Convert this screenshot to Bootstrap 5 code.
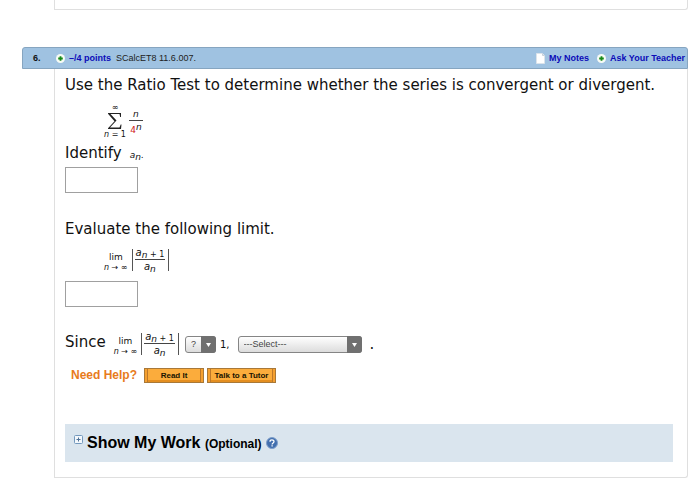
<!DOCTYPE html>
<html lang="en">
<head>
<meta charset="utf-8">
<meta name="viewport" content="width=device-width, initial-scale=1">
<title>SCalcET8 11.6.007</title>
<link href="https://cdn.jsdelivr.net/npm/bootstrap@5.3.0/dist/css/bootstrap.min.css" rel="stylesheet">
<style>
body{font-family:"DejaVu Sans",Verdana,sans-serif;color:#111;background:#fff;font-size:15px;line-height:20px}
.arial{font-family:"Liberation Sans",Arial,sans-serif}
.page{padding:0 12px 0 22px}
.panel{margin-left:32px;border:1px solid #dfdfdf}
.panel-prev{height:10px;border-top:0;border-radius:0 0 3px 0;margin-bottom:37px}
.panel-main{border-top:0;border-radius:0 0 3px 0;padding:6px 14px 15px 10px}
.q-head{height:22px;background:#9fc2e1;border:1px solid #86a5c0;border-radius:3px 3px 0 0;padding:0 2px 0 10px;font-size:9px;line-height:20px}
.q-num{width:23px}
.q-head a{color:#0b0bb8;font-weight:bold;text-decoration:none}
.q-src{color:#222;margin-left:5px}
.math{font-size:9px;line-height:11px}
.indent{margin-left:39px}
.tiny{font-size:8px;line-height:9px}
.fraction{margin:6px 0 0 3px}
.fraction .over{width:14px;text-align:center}
.fraction .under{padding-top:4px}
.var{font-size:10px}
.sub{font-size:9px;position:relative;top:2px}
.plus{font-size:8px;position:relative;top:1px}
.sup{font-size:9px;position:relative;top:-3px}
.over{border-bottom:1px solid #444}
.bars{border-left:1px solid #555;border-right:1px solid #555;padding:0 3px 0 2px;height:22px}
.bars .over{height:11px;line-height:8px;padding:0 1px}
.bars .under{height:11px;line-height:14px}
.red{color:#d02020}
.answer{width:73px;height:26px;border:1px solid #a0a0a0;border-radius:0;padding:2px 4px;font-size:14px;display:block}
.row-identify{margin:4px 0}
.gap-part{margin-top:26px}
.limit{margin-top:9px;margin-bottom:9px}
.gap-since{margin-top:25px}
.pick{position:relative;height:17px}
.pick select{appearance:none;height:17px;border:1px solid #858585;border-radius:3px;background:linear-gradient(#fff,#dcdcdc);font-size:9px;line-height:15px;padding:0 16px 0 5px;color:#444}
.pick svg{position:absolute;right:0;top:0;pointer-events:none}
.pick-op{width:31px;margin-left:6px}
.pick-word{width:124px}
.help-row{margin:12px 0 41px 6px}
.help{color:#e87b1c;font-size:12px;font-weight:bold;line-height:15px;margin-right:7px}
.gold{height:15px;border:1px solid #a87838;background:#fbac3c;box-shadow:inset 2px 0 0 #f5a030,inset 3px 0 0 #bd782a,inset -2px 0 0 #f5a030,inset -3px 0 0 #bd782a,inset 0 -2px 0 #e48e20;border-radius:0;padding:0;font-size:8px;line-height:13px;font-weight:bold;color:#201400}
.gold-read{width:60px;margin-right:3px}
.gold-tutor{width:69px}
.work{background:#dae5ee;height:38px;padding:0 9px;font-weight:bold}
.toggle{border:0;background:none;padding:0;line-height:0}
.work-title{font-size:16px;line-height:20px;color:#000}
.work-opt{font-size:12px}
</style>
<script src="https://cdn.jsdelivr.net/npm/bootstrap@5.3.0/dist/js/bootstrap.bundle.min.js"></script>
</head>
<body>
<main class="page">
  <div class="panel panel-prev"></div>
  <header class="q-head arial d-flex align-items-center">
    <b class="q-num">6.</b>
    <svg width="9" height="9" viewBox="0 0 9 9"><circle cx="4.500" cy="4.500" r="4.500" fill="#f7fbf5"/><path d="M4.500 2.200v4.600M2.200 4.500h4.600" stroke="#178a17" stroke-width="1.800"/></svg>
    <a class="ms-1" href="#">–/4 points</a>
    <span class="q-src">SCalcET8 11.6.007.</span>
    <svg class="ms-auto" width="9" height="11" viewBox="0 0 9 11"><path d="M.5.500h6l2 2v8h-8z" fill="#fff" stroke="#dbe3ea"/><path d="M6.500.500v2h2" fill="none" stroke="#c5d0da"/></svg>
    <a class="ms-1" href="#">My Notes</a>
    <svg class="ms-2" width="9" height="9" viewBox="0 0 9 9"><circle cx="4.500" cy="4.500" r="4.500" fill="#f7fbf5"/><path d="M4.500 2.200v4.600M2.200 4.500h4.600" stroke="#178a17" stroke-width="1.800"/></svg>
    <a class="ms-1" href="#">Ask Your Teacher</a>
  </header>
  <section class="panel panel-main">
    <p class="mb-2">Use the Ratio Test to determine whether the series is convergent or divergent.</p>
    <div class="math indent d-flex">
      <div class="d-flex flex-column align-items-center">
        <span class="tiny">∞</span>
        <svg width="16" height="18" viewBox="0 0 16 18"><path d="M1 1h13v4h-.8L12.500 2H3.500l6 6.500L3 15.500h9.500l1.200-3h.8L14 17H1v-.8l6.500-7L1 1.800z" fill="#222"/></svg>
        <i class="tiny">n <span class="fst-normal">= 1</span></i>
      </div>
      <div class="fraction d-flex flex-column align-items-center">
        <i class="over">n</i>
        <span class="under"><span class="red">4</span><i class="sup">n</i></span>
      </div>
    </div>
    <div class="row-identify d-flex align-items-center"><label for="an">Identify</label><span class="math ms-2 pt-1"><i>a<span class="sub">n</span></i>.</span></div>
    <input class="answer form-control" id="an" type="text">
    <label class="gap-part d-block" for="lim">Evaluate the following limit.</label>
    <div class="limit d-flex">
      <div class="math indent d-flex align-items-center">
        <div class="d-flex flex-column align-items-center me-1 pt-1"><span>lim</span><span class="tiny"><i>n</i> → ∞</span></div>
        <div class="bars"><div class="over"><i class="var">a<span class="sub">n</span></i><span class="plus"> + 1</span></div><div class="under text-center"><i class="var">a<span class="sub">n</span></i></div></div>
      </div>
    </div>
    <input class="answer form-control" id="lim" type="text">
    <div class="gap-since d-flex align-items-center">
      <span class="pb-1">Since</span>
      <div class="math d-flex align-items-center ms-2">
        <div class="d-flex flex-column align-items-center me-1 pt-1"><span>lim</span><span class="tiny"><i>n</i> → ∞</span></div>
        <div class="bars"><div class="over"><i class="var">a<span class="sub">n</span></i><span class="plus"> + 1</span></div><div class="under text-center"><i class="var">a<span class="sub">n</span></i></div></div>
      </div>
      <div class="pick pick-op arial d-flex"><select class="w-100" aria-label="Comparison"><option>?</option></select><svg width="15" height="17" viewBox="0 0 15 17"><path d="M0 0h12a3 3 0 0 1 3 3v11a3 3 0 0 1-3 3H0z" fill="#707070"/><path d="M5 7h5l-2.500 4z" fill="#fff"/></svg></div>
      <span class="math var ms-1">1,</span>
      <div class="pick pick-word arial d-flex ms-2"><select class="w-100" aria-label="Conclusion"><option>---Select---</option></select><svg width="15" height="17" viewBox="0 0 15 17"><path d="M0 0h12a3 3 0 0 1 3 3v11a3 3 0 0 1-3 3H0z" fill="#707070"/><path d="M5 7h5l-2.500 4z" fill="#fff"/></svg></div>
      <span class="ms-2">.</span>
    </div>
    <div class="help-row arial d-flex align-items-center">
      <span class="help">Need Help?</span>
      <button class="gold gold-read" type="button">Read It</button>
      <button class="gold gold-tutor" type="button">Talk to a Tutor</button>
    </div>
    <div class="work arial d-flex align-items-center">
      <button class="toggle mb-2 me-1" type="button" aria-label="Expand"><svg width="9" height="9" viewBox="0 0 9 9"><rect x=".5" y=".5" width="8" height="8" rx="1" fill="#f3f8fc" stroke="#7398bd"/><path d="M4.500 2.500v4M2.500 4.500h4" stroke="#4d7097"/></svg></button>
      <span class="work-title">Show My Work <span class="work-opt">(Optional)</span></span>
      <a class="ms-1 d-flex" href="#" aria-label="Help"><svg width="12" height="12" viewBox="0 0 12 12"><circle cx="6" cy="6" r="5.500" fill="#426fae" stroke="#7f9fca"/><path d="M4 4.700C4 2.400 8 2.400 8 4.600 8 6 6.100 5.900 6.100 7.500M6.100 8.300v1.300" fill="none" stroke="#fff" stroke-width="1.300"/></svg></a>
    </div>
  </section>
</main>
</body>
</html>
